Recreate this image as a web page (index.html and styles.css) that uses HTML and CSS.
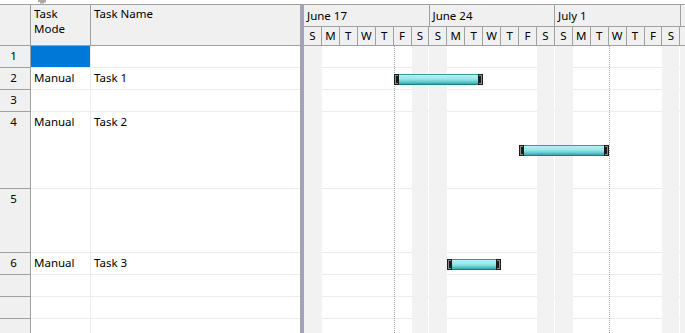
FILE: index.html
```html
<!DOCTYPE html>
<html lang="en">
<head>
    <meta charset="UTF-8">
    <title>Gantt Chart</title>
    <link rel="stylesheet" href="styles.css">
</head>
<body>
    <div class="topbar">
        <svg class="cursor" width="10" height="4" viewBox="0 0 10 4">
            <path d="M1 0V2M3 0V3.5M5 0V3.5M7 0V2.5" stroke="#555" stroke-width="1" fill="none"/>
        </svg>
    </div>

    <div class="view">
        <div class="sheet">
            <div class="sheet-head">
                <div class="num"></div>
                <div class="mode">Task<br>Mode</div>
                <div class="name">Task Name</div>
            </div>
            <div class="sheet-row">
                <div class="num">1</div>
                <div class="mode selected"></div>
                <div class="name"></div>
            </div>
            <div class="sheet-row">
                <div class="num">2</div>
                <div class="mode">Manual</div>
                <div class="name">Task 1</div>
            </div>
            <div class="sheet-row">
                <div class="num">3</div>
                <div class="mode"></div>
                <div class="name"></div>
            </div>
            <div class="sheet-row tall">
                <div class="num">4</div>
                <div class="mode">Manual</div>
                <div class="name">Task 2</div>
            </div>
            <div class="sheet-row taller">
                <div class="num">5</div>
                <div class="mode"></div>
                <div class="name"></div>
            </div>
            <div class="sheet-row">
                <div class="num">6</div>
                <div class="mode">Manual</div>
                <div class="name">Task 3</div>
            </div>
            <div class="sheet-row">
                <div class="num"></div>
                <div class="mode"></div>
                <div class="name"></div>
            </div>
            <div class="sheet-row">
                <div class="num"></div>
                <div class="mode"></div>
                <div class="name"></div>
            </div>
            <div class="sheet-row">
                <div class="num"></div>
                <div class="mode"></div>
                <div class="name"></div>
            </div>
        </div>

        <div class="splitter"></div>

        <div class="chart">
            <div class="timescale">
                <div class="weeks">
                    <div class="week">June 17</div>
                    <div class="week">June 24</div>
                    <div class="week">July 1</div>
                    <div class="week"></div>
                </div>
                <div class="days">
                    <div class="day">S</div><div class="day">M</div><div class="day">T</div><div class="day">W</div><div class="day">T</div><div class="day">F</div><div class="day">S</div>
                    <div class="day">S</div><div class="day">M</div><div class="day">T</div><div class="day">W</div><div class="day">T</div><div class="day">F</div><div class="day">S</div>
                    <div class="day">S</div><div class="day">M</div><div class="day">T</div><div class="day">W</div><div class="day">T</div><div class="day">F</div><div class="day">S</div>
                    <div class="day"></div>
                </div>
            </div>

            <div class="chart-body">
                <!-- row lines -->
                <div class="line" style="grid-row: 1"></div>
                <div class="line" style="grid-row: 2"></div>
                <div class="line" style="grid-row: 3"></div>
                <div class="line" style="grid-row: 4"></div>
                <div class="line" style="grid-row: 5"></div>
                <div class="line" style="grid-row: 6"></div>
                <div class="line" style="grid-row: 7"></div>
                <div class="line" style="grid-row: 8"></div>
                <div class="line" style="grid-row: 9"></div>

                <!-- non-working days -->
                <div class="shade" style="grid-column: 1"></div>
                <div class="shade sat" style="grid-column: 7"></div>
                <div class="shade" style="grid-column: 8"></div>
                <div class="shade sat" style="grid-column: 14"></div>
                <div class="shade" style="grid-column: 15"></div>
                <div class="shade sat" style="grid-column: 21"></div>
                <div class="shade" style="grid-column: 22"></div>

                <div class="marker" style="grid-column: 6"></div>
                <div class="marker" style="grid-column: 18"></div>

                <!-- tasks -->
                <div class="bar" style="grid-row: 2; grid-column: 6 / span 5">
                    <span class="cap left"></span><span class="fill"></span><span class="cap right"></span>
                </div>
                <div class="bar" style="grid-row: 4; grid-column: 13 / span 5">
                    <span class="cap left"></span><span class="fill"></span><span class="cap right"></span>
                </div>
                <div class="bar" style="grid-row: 6; grid-column: 9 / span 3">
                    <span class="cap left"></span><span class="fill"></span><span class="cap right"></span>
                </div>
            </div>
        </div>
    </div>
</body>
</html>
```

FILE: styles.css
```css
* {
    margin: 0;
    padding: 0;
    box-sizing: border-box;
}

body {
    background: white;
    font-family: 'Noto Sans', 'Liberation Sans', sans-serif;
    font-size: 11.5px;
    line-height: 15px;
    color: #000;
    width: 685px;
    height: 333px;
    overflow: hidden;
}

.topbar {
    position: relative;
    height: 5px;
    border-bottom: 1px solid #a0a0a0;
}

.cursor {
    position: absolute;
    left: 38px;
    top: 0;
}

.view {
    display: flex;
    height: 328px;
}

/* ---- left sheet ---- */

.sheet {
    width: 300px;
    flex-shrink: 0;
}

.sheet-head,
.sheet-row {
    display: flex;
}

.sheet-head {
    height: 41px;
    background: #f0f0f0;
    border-bottom: 1px solid #a0a0a0;
}

.sheet-row {
    height: 22px;
}

.sheet-row.tall {
    height: 77px;
}

.sheet-row.taller {
    height: 64px;
}

.num {
    width: 31px;
    flex-shrink: 0;
    background: #f0f0f0;
    border-right: 1px solid #a0a0a0;
    text-align: center;
    padding-right: 3px;
    padding-top: 2px;
}

.mode {
    width: 60px;
    flex-shrink: 0;
    padding: 2px 3px 0;
    border-right: 1px solid #ececec;
}

.name {
    flex: 1;
    padding: 2px 3px 0;
}

.sheet-head .mode,
.sheet-head .name {
    padding-top: 1px;
}

.sheet-head .mode {
    border-right-color: #a0a0a0;
}

.sheet-row .num {
    border-bottom: 1px solid #a0a0a0;
}

.sheet-row .mode,
.sheet-row .name {
    border-bottom: 1px solid #ececec;
}

.mode.selected {
    background: #0078d7;
}

.splitter {
    width: 4px;
    flex-shrink: 0;
    background: #a3a3b7;
}

/* ---- chart ---- */

.chart {
    flex: 1;
    overflow: hidden;
}

.timescale {
    background: #f0f0f0;
    border-bottom: 1px solid #a0a0a0;
}

.weeks,
.days {
    display: flex;
}

.weeks {
    height: 22px;
    border-bottom: 1px solid #a0a0a0;
}

.week {
    width: 125.5px;
    flex-shrink: 0;
    border-right: 1px solid #a0a0a0;
    padding: 3px 0 0 3px;
}

.days {
    height: 18px;
}

.day {
    width: 17.93px;
    flex-shrink: 0;
    border-right: 1px solid #a0a0a0;
    text-align: center;
    padding-top: 1px;
}

.chart-body {
    display: grid;
    grid-template-columns: repeat(22, 17.93px);
    grid-template-rows: 22px 22px 22px 77px 64px 22px 22px 22px 22px;
}

.line {
    grid-column: 1 / -1;
    border-bottom: 1px solid #ececec;
}

.shade {
    grid-row: 1 / -1;
    background: #f2f2f2;
}

.shade.sat {
    margin-right: 1px;
}

.marker {
    grid-row: 1 / -1;
    border-left: 1px dotted #a8a8a8;
}

.bar {
    display: flex;
    align-self: center;
    height: 11px;
}

.fill {
    flex: 1;
    border-top: 1px solid #2f9c9e;
    border-bottom: 1px solid #1c7f81;
    background: linear-gradient(#b6f1f3, #98e6e8 45%, #6fd0d3 70%, #2fa8ab);
}

.cap {
    width: 5px;
    flex-shrink: 0;
    display: flex;
    padding: 1px;
    background: #1c1c1c;
}

.cap::before {
    content: '';
    flex: 1;
    border: 1px solid #8c8c8c;
}

.cap.left::before {
    border-right: none;
}

.cap.right::before {
    border-left: none;
}
```
